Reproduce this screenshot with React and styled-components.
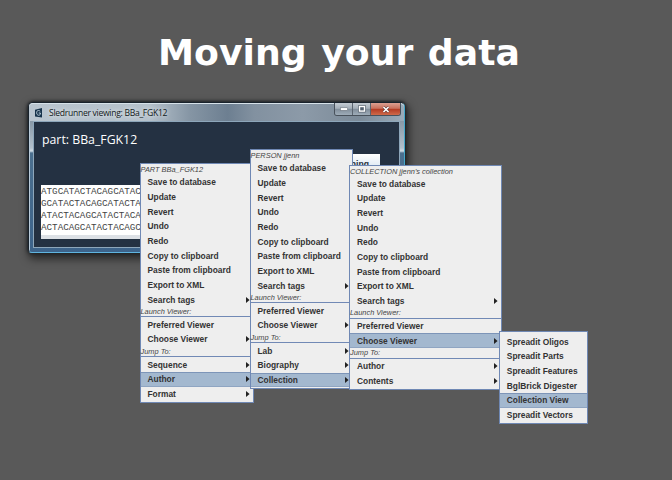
import React from "react";
import styled, { createGlobalStyle } from "styled-components";

const Global = createGlobalStyle`
  * { box-sizing: border-box; }
  body { margin: 0; background: #595959; font-family: "Liberation Sans", Arial, sans-serif; }
`;

const Slide = styled.main`
  position: relative;
  width: 672px;
  height: 480px;
  overflow: hidden;
  background: #595959;
`;

const Title = styled.h1`
  margin: 0;
  padding: 30px 0 0 6px;
  height: 102px;
  text-align: center;
  color: #fff;
  font: bold 36.2px/46px "DejaVu Sans", Verdana, sans-serif;
  word-spacing: 2px;
  white-space: nowrap;
`;

const Window = styled.section`
  display: flex;
  flex-direction: column;
  width: 377px;
  height: 151px;
  margin-left: 28px;
  padding: 0 4px 4px;
  border: 1px solid #18222c;
  border-right-color: #45a9cc;
  border-bottom-color: #5fb4df;
  border-radius: 5px 5px 4px 4px;
  background:
    linear-gradient(90deg, #b9cbd9 0 1px, transparent 1px) 0 0 / 100% 100% no-repeat,
    linear-gradient(180deg, #acb9c4 0, #8797a5 17px, #b2c0cc 45px, #d0dce5 48px, #4c708f 50px, #3d638a 100%);
  box-shadow: 0 0 3px 1px #202428, 2px 4px 9px 2px rgba(0, 0, 0, 0.55);
`;

const TitleBar = styled.header`
  display: flex;
  align-items: center;
  flex: none;
  height: 18px;
  margin: 0 -4px;
  padding-left: 6px;
  border-top: 1px solid #d7e2e9;
  border-radius: 4px 4px 0 0;
  background: linear-gradient(90deg, #b9c5cf 0, #b5c1cb 32%, #8595a4 43%, #6d7f91 53%, #8291a0 60%, #8c9aa8 73%, #7c8b99 88%, #9aabb9 100%);
`;

const Caption = styled.span`
  margin-left: 6px;
  color: #111920;
  font: 8.6px/14px "Open Sans", "Noto Sans", sans-serif;
  letter-spacing: -0.3px;
  white-space: nowrap;
  text-shadow: 0 0 4px #fff;
`;

const Controls = styled.div`
  display: flex;
  align-self: flex-start;
  margin: -1px 3px 0 auto;
  height: 13px;
  border: 1px solid #48515b;
  border-top: 0;
  border-radius: 0 0 3px 3px;
  overflow: hidden;
`;

const Control = styled.span`
  display: flex;
  align-items: center;
  justify-content: center;
  width: ${(p) => (p.$close ? 29 : 18)}px;
  border-right: ${(p) => (p.$close ? 0 : "1px solid #5b6570")};
  background: ${(p) =>
    p.$close
      ? "linear-gradient(#dca092 0, #c9705c 45%, #b33a22 50%, #cf6a4a 100%)"
      : "linear-gradient(#c4ccd3 0, #a3aeb8 45%, #808d9a 50%, #9eacb8 100%)"};
`;

const Client = styled.div`
  display: flex;
  flex-direction: column;
  flex: 1;
  border: 1px solid #1a2532;
  outline: 1px solid #8da6ba;
  outline-offset: -1px;
  background: #243142;
`;

const PartName = styled.div`
  padding: 8px 0 0 8px;
  height: 32px;
  color: #fff;
  font: 12.3px/19px "Open Sans", "Noto Sans", sans-serif;
  white-space: nowrap;
`;

const ButtonRow = styled.div`
  display: flex;
  justify-content: flex-end;
  padding-right: 19px;
  height: 31px;
`;

const ActionButton = styled.div`
  width: 60px;
  height: 17px;
  padding: 3px 11px 0 0;
  text-align: right;
  background: linear-gradient(#fff, #d4e2ef);
  color: #27303a;
  font: bold 8.6px/14px "Liberation Sans", Arial, sans-serif;
`;

const Sequence = styled.pre`
  margin: 0 7px;
  height: 54px;
  padding: 1px 0 0;
  background: linear-gradient(#fff 0 92%, #dde1e6 92%);
  color: #444;
  font: 9.25px/12px "Liberation Mono", "Courier New", monospace;
  overflow: hidden;
`;

const Menu = styled.div`
  position: absolute;
  left: ${(p) => p.$x}px;
  top: ${(p) => p.$y}px;
  width: ${(p) => p.$w}px;
  padding: ${(p) => (p.$sub ? "2.3px 0 1px" : "0 0 1px")};
  border: 1px solid #6f88b4;
  background: #eee;
`;

const Heading = styled.div`
  height: 11px;
  padding-top: 1px;
  color: #444;
  font: italic 7.4px/10px "Liberation Sans", Arial, sans-serif;
  white-space: nowrap;
`;

const Section = styled(Heading)`
  height: ${(p) => (p.$first ? 10.3 : 10.9)}px;
  padding-top: 0;
  border-bottom: 1px solid #7189b5;
`;

const Item = styled.div`
  display: flex;
  align-items: center;
  justify-content: space-between;
  height: 14.67px;
  padding: 0 3px 0 ${(p) => (p.$sub ? 7.3 : 7)}px;
  background: ${(p) => (p.$active ? "#a3b8cf" : "transparent")};
  box-shadow: ${(p) => (p.$active ? "inset 0 1px #7d95b8, inset 0 -1px #8fa5c2" : "none")};
  color: #333;
  font: bold 8.4px/14px "Liberation Sans", Arial, sans-serif;
  white-space: nowrap;
`;

const Arrow = () => (
  <svg width="4" height="6" viewBox="0 0 4 6">
    <path d="M0 0 L3.6 3 L0 6Z" fill="#222" />
  </svg>
);

const COMMANDS = [
  "Save to database", "Update", "Revert", "Undo", "Redo",
  "Copy to clipboard", "Paste from clipboard", "Export to XML",
];

const ObjectMenu = ({ heading, x, y, w, targets, active }) => (
  <Menu $x={x} $y={y} $w={w}>
    <Heading>{heading}</Heading>
    {COMMANDS.map((c) => <Item key={c}>{c}</Item>)}
    <Item>Search tags<Arrow /></Item>
    <Section $first>Launch Viewer:</Section>
    <Item>Preferred Viewer</Item>
    <Item $active={active === "Choose Viewer"}>Choose Viewer<Arrow /></Item>
    <Section>Jump To:</Section>
    {targets.map((t) => <Item key={t} $active={active === t}>{t}<Arrow /></Item>)}
  </Menu>
);

const VIEWERS = ["Spreadit Oligos", "Spreadit Parts", "Spreadit Features", "BglBrick Digester", "Collection View", "Spreadit Vectors"];

export default function App() {
  return (
    <Slide>
      <Global />
      <Title>Moving your data</Title>
      <Window>
        <TitleBar>
          <svg width="8" height="10" viewBox="0 0 8 10">
            <path d="M0 1.8 L7 0 V9.5 L0 8.5Z" fill="#17334b" />
            <path d="M5.2 3.2 C3 1.5 1.5 3 1.7 5 C1.9 7.7 4.5 7.8 5.4 6.2 V5 H3.7" fill="none" stroke="#b7cbd9" strokeWidth="1" />
          </svg>
          <Caption>Sledrunner viewing: BBa_FGK12</Caption>
          <Controls>
            <Control>
              <svg width="8" height="4" viewBox="0 0 8 4"><rect x="0.5" y="0.8" width="7" height="2.5" fill="#fff" stroke="#626b75" strokeWidth=".5" /></svg>
            </Control>
            <Control>
              <svg width="8" height="8" viewBox="0 0 8 8"><rect x="1.5" y="1.5" width="5" height="4.6" fill="#536170" stroke="#4a5561" strokeWidth="2.5" /><rect x="1.5" y="1.5" width="5" height="4.6" fill="#536170" stroke="#fff" strokeWidth="1.4" /></svg>
            </Control>
            <Control $close>
              <svg width="8" height="7" viewBox="0 0 8 7"><path d="M1.5 1 L6.5 6 M6.5 1 L1.5 6" stroke="#5b3431" strokeWidth="2.7" /><path d="M1.5 1 L6.5 6 M6.5 1 L1.5 6" stroke="#fff" strokeWidth="1.7" /></svg>
            </Control>
          </Controls>
        </TitleBar>
        <Client>
          <PartName>part: BBa_FGK12</PartName>
          <ButtonRow><ActionButton>Searching</ActionButton></ButtonRow>
          <Sequence>{"ATGCATACTACAGCATAC\nGCATACTACAGCATACTA\nATACTACAGCATACTACA\nACTACAGCATACTACAGC"}</Sequence>
        </Client>
      </Window>
      <ObjectMenu heading="PART BBa_FGK12" x={139.5} y={163} w={114} targets={["Sequence", "Author", "Format"]} active="Author" />
      <ObjectMenu heading="PERSON jjenn" x={249.5} y={149} w={103.5} targets={["Lab", "Biography", "Collection"]} active="Collection" />
      <ObjectMenu heading="COLLECTION jjenn's collection" x={349} y={164.5} w={153} targets={["Author", "Contents"]} active="Choose Viewer" />
      <Menu $sub $x={498.5} $y={331} $w={89}>
        {VIEWERS.map((v) => <Item key={v} $sub $active={v === "Collection View"}>{v}</Item>)}
      </Menu>
    </Slide>
  );
}
